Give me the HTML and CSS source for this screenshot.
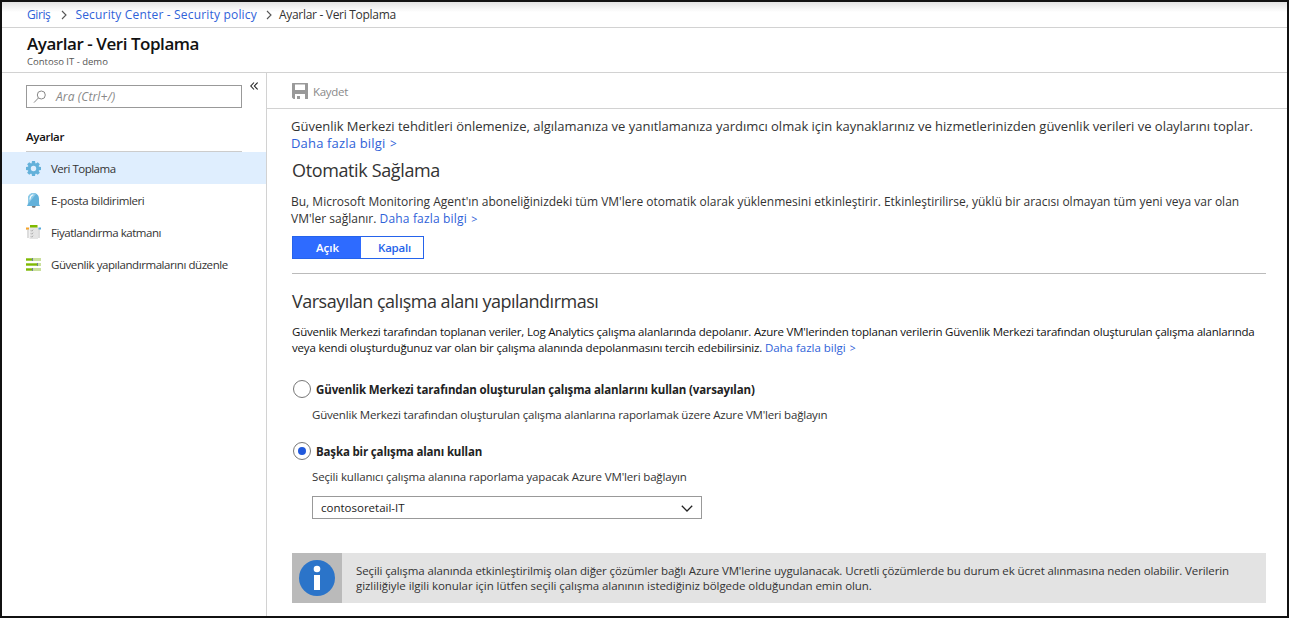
FILE: index.html
```html
<!DOCTYPE html>
<html lang="tr">
<head>
<meta charset="utf-8">
<title>Ayarlar - Veri Toplama</title>
<link rel="stylesheet" href="styles.css">
</head>
<body>
<div class="portal">
  <nav class="breadcrumb">
    <a class="crumb-home">Giriş</a>
    <svg class="sep" width="6" height="10" viewBox="0 0 6 10"><path d="M1 1l4 4-4 4"/></svg>
    <a class="crumb-policy">Security Center - Security policy</a>
    <svg class="sep sep-last" width="6" height="10" viewBox="0 0 6 10"><path d="M1 1l4 4-4 4"/></svg>
    <span class="crumb-current">Ayarlar - Veri Toplama</span>
  </nav>
  <header class="heading">
    <h1><span class="title">Ayarlar - Veri Toplama</span></h1>
    <div><span class="subtitle">Contoso IT - demo</span></div>
  </header>
  <div class="body">
    <aside class="sidebar">
      <div class="search-row">
        <div class="search">
          <svg width="14" height="14" viewBox="0 0 14 14"><circle cx="8.3" cy="5" r="4"/><path d="M5.4 8L1 12.6"/></svg>
          <span>Ara (Ctrl+/)</span>
        </div>
        <svg class="collapse" width="8" height="8" viewBox="0 0 8 8"><path d="M4 .5L.8 4 4 7.500M7.600 .5L4.400 4l3.200 3.500"/></svg>
      </div>
      <h2><span class="group">Ayarlar</span></h2>
      <ul class="menu">
        <li class="active">
          <svg width="16" height="16" viewBox="0 0 16 16"><g fill="#63b1da"><circle cx="7.500" cy="8.500" r="5.600"/><path id="t" d="M6 1h3l.5 3h-4zM6 16h3l.5-3h-4z"/><use href="#t" transform="rotate(45 7.500 8.500)"/><use href="#t" transform="rotate(90 7.500 8.500)"/><use href="#t" transform="rotate(135 7.500 8.500)"/></g><circle cx="7.500" cy="8.500" r="2.700" fill="#dfeefe"/></svg>
          <span class="m1">Veri Toplama</span>
        </li>
        <li>
          <svg width="16" height="16" viewBox="0 0 16 16"><path d="M5.500 13.500h4.500l-1 2.300H6.500z" fill="#777"/><path d="M.8 14c1-1 1.200-2 1.200-4V7C2 3.500 4.200 1 7.500 1S13 3.500 13 7v3c0 2 .2 3 1.200 4z" fill="#63b1da"/><path d="M2 12V7C2 3.500 4.200 1 7.500 1c1.200 0 2 .2 2.800.7z" fill="#8ecbe8"/><path d="M4 7.500c0-3 1.200-4.200 3.300-4.800" fill="none" stroke="#fff" stroke-width="1.100"/></svg>
          <span class="m2">E-posta bildirimleri</span>
        </li>
        <li>
          <svg width="16" height="16" viewBox="0 0 16 16"><path d="M0 4h3v10H1V6H0zM12 4h2v10h-2z" fill="#ddd"/><path d="M0 3.500h3v2H0z" fill="#f7a52b"/><path d="M12.500 3.500H15v2h-2.500z" fill="#55aadd"/><path d="M3.500 3h8.500v12H3.500z" fill="#e4e4e4"/><path d="M4 1h7.500v2.500H4z" fill="#7fba00"/><path d="M5 6.500l.7 .7 1.300-1.500M5 9.500l.7 .7 1.300-1.500M5 12.500l.7 .7 1.300-1.500" fill="none" stroke="#8a8a8a" stroke-width=".7"/></svg>
          <span class="m3">Fiyatlandırma katmanı</span>
        </li>
        <li>
          <svg width="16" height="16" viewBox="0 0 16 16"><path d="M0 2h15v3H0zM0 7h15v3H0zM0 12h15v3H0z" fill="#c9e09c"/><path d="M0 2.500h6v2H0zM0 7.500h11v2H0zM0 12.500h6v2H0z" fill="#7fba00"/><path d="M6 2h1v3H6zM11 7h1v3h-1zM6 12h1v3H6z" fill="#718096"/></svg>
          <span class="m4">Güvenlik yapılandırmalarını düzenle</span>
        </li>
      </ul>
    </aside>
    <main>
      <div class="toolbar">
        <svg width="16" height="16" viewBox="0 0 16 16"><path fill-rule="evenodd" d="M0 .5Q0 0 .5 0h15q.5 0 .5.5V16h-3v-5H3v5H1.500L0 14.500zM3 1.500v5.500h10V1.500z" fill="#999"/><path d="M5 13h3v3H5z" fill="#999"/></svg>
        <span class="save">Kaydet</span>
      </div>
      <div class="content">
        <p class="intro"><span class="i1">Güvenlik Merkezi tehditleri önlemenize, algılamanıza ve yanıtlamanıza yardımcı olmak için kaynaklarınız ve hizmetlerinizden güvenlik verileri ve olaylarını toplar.</span><br><a class="i2">Daha fazla bilgi <span class="gt">&gt;</span></a></p>
        <h3><span class="h-auto">Otomatik Sağlama</span></h3>
        <p class="agent"><span class="a1">Bu, Microsoft Monitoring Agent'ın aboneliğinizdeki tüm VM'lere otomatik olarak yüklenmesini etkinleştirir. Etkinleştirilirse, yüklü bir aracısı olmayan tüm yeni veya var olan</span><br><span class="a2">VM'ler sağlanır. <a>Daha fazla bilgi <span class="gt">&gt;</span></a></span></p>
        <div class="toggle"><span class="on">Açık</span><span class="off">Kapalı</span></div>
        <hr>
        <h3 class="workspace"><span class="h-work">Varsayılan çalışma alanı yapılandırması</span></h3>
        <p class="storage"><span class="s1">Güvenlik Merkezi tarafından toplanan veriler, Log Analytics çalışma alanlarında depolanır. Azure VM'lerinden toplanan verilerin Güvenlik Merkezi tarafından oluşturulan çalışma alanlarında</span><br><span class="s2">veya kendi oluşturduğunuz var olan bir çalışma alanında depolanmasını tercih edebilirsiniz. <a>Daha fazla bilgi <span class="gt">&gt;</span></a></span></p>
        <div class="option">
          <div class="choice"><i class="radio"></i><b class="r1">Güvenlik Merkezi tarafından oluşturulan çalışma alanlarını kullan (varsayılan)</b></div>
          <div class="desc"><span class="d1">Güvenlik Merkezi tarafından oluşturulan çalışma alanlarına raporlamak üzere Azure VM'leri bağlayın</span></div>
        </div>
        <div class="option">
          <div class="choice"><i class="radio checked"></i><b class="r2">Başka bir çalışma alanı kullan</b></div>
          <div class="desc"><span class="d2">Seçili kullanıcı çalışma alanına raporlama yapacak Azure VM'leri bağlayın</span></div>
        </div>
        <div class="select"><span>contosoretail-IT</span><svg width="12" height="7" viewBox="0 0 12 7"><path d="M.8 .8L6 6l5.200-5.200"/></svg></div>
        <div class="notice">
          <div class="notice-icon"><svg width="36" height="36" viewBox="0 0 36 36"><circle cx="18" cy="18" r="18" fill="#2b74c9"/><circle cx="18" cy="9" r="3.300" fill="#fff"/><path d="M15 15h6v15h-6z" fill="#fff"/></svg></div>
          <p><span class="n1">Seçili çalışma alanında etkinleştirilmiş olan diğer çözümler bağlı Azure VM'lerine uygulanacak. Ucretli çözümlerde bu durum ek ücret alınmasına neden olabilir. Verilerin</span><br><span class="n2">gizliliğiyle ilgili konular için lütfen seçili çalışma alanının istediğiniz bölgede olduğundan emin olun.</span></p>
        </div>
      </div>
    </main>
  </div>
</div>
</body>
</html>
```
FILE: styles.css
```css
* { box-sizing: border-box; }
body { margin: 0; font-family: "Open Sans", "Noto Sans", sans-serif; font-size: 11.5px; color: #333; background: #fff; }
h1, h2, h3, p, ul { margin: 0; padding: 0; font-weight: 400; }
span, b, a { white-space: nowrap; }
a { color: #2f62d8; }
.gt { font-size: .9em; margin-left: 1px; }
svg { display: block; flex: none; }
.portal { width: 1289px; height: 618px; border: 2px solid #111; display: flex; flex-direction: column; overflow: hidden; }
.breadcrumb { height: 26px; flex: none; display: flex; align-items: center; padding-left: 25px; border-bottom: 1px solid #d2d2d2; background: linear-gradient(#e2e2e2, #fff 10px); font-size: 12px; }
.crumb-home { letter-spacing: -.4px; }
.crumb-policy { letter-spacing: .18px; }
.crumb-current { letter-spacing: -.3px; }
.sep { margin: 0 8px 0 11px; }
.sep-last { margin: 0 7px 0 9px; }
.sep path { fill: none; stroke: #555; stroke-width: 1.1; }
.heading { height: 45px; flex: none; padding: 5px 0 0 25px; border-bottom: 1px solid #d2d2d2; }
.heading h1 { font-size: 17px; line-height: 22px; font-weight: 600; color: #111; letter-spacing: -.45px; }
.heading div { font-size: 9.500px; line-height: 13px; color: #555; }
.body { flex: 1; display: flex; min-height: 0; }
.sidebar { width: 265px; flex: none; border-right: 1px solid #d2d2d2; }
.search-row { display: flex; padding: 12px 0 0 24px; gap: 8px; }
.search { width: 216px; height: 23px; border: 1px solid #999; display: flex; align-items: center; gap: 9px; padding-left: 6px; font-size: 12px; font-style: italic; color: #888; letter-spacing: .1px; }
.search svg { fill: none; stroke: #888; stroke-width: 1; }
.collapse { margin-top: -3px; fill: none; stroke: #222; stroke-width: 1.100; }
h2 { margin: 17px 0 0 24px; width: 216px; height: 27px; line-height: 24px; font-size: 11.500px; font-weight: 600; color: #111; border-bottom: 1px solid #ccc; letter-spacing: -.3px; }
.menu { list-style: none; }
.menu li { height: 32px; display: flex; align-items: center; gap: 9px; padding-left: 24px; letter-spacing: -.43px; }
.menu .m1 { letter-spacing: -.5px; }
.menu .m2 { letter-spacing: -.38px; }
.menu .m3 { letter-spacing: -.46px; }
.menu .active { background: #dfeefe; }
main { flex: 1; min-width: 0; }
.toolbar { height: 36px; border-bottom: 1px solid #d2d2d2; display: flex; align-items: center; gap: 5px; padding-left: 25px; color: #8a8a8a; }
.save { letter-spacing: -.3px; padding-top: 1px; }
.content { padding: 9px 21px 0 25px; }
.intro { font-size: 13px; line-height: 17px; margin-left: -1px; }
.i1 { letter-spacing: -.01px; }
.i2 { letter-spacing: .17px; }
h3 { font-size: 18px; line-height: 24px; margin-top: 6px; }
.h-auto { letter-spacing: -.37px; }
.h-work { letter-spacing: -.5px; }
.agent { font-size: 12px; line-height: 17px; margin: 11px 0 0 -1px; }
.agent a { letter-spacing: .17px; }
.toggle { width: 132px; height: 23px; margin-top: 9px; border: 1px solid #2563eb; display: flex; font-weight: 600; line-height: 21px; }
.on { width: 68px; background: #2e6bff; color: #fff; padding-left: 23px; }
.off { padding-left: 17px; color: #2563eb; letter-spacing: -.2px; }
hr { border: 0; height: 1px; background: #bbb; margin: 14px 0 0; }
.workspace { margin-top: 15px; }
.storage { margin-top: 11px; line-height: 16px; color: #111; }
.s1 { letter-spacing: -.205px; }
.s2 { letter-spacing: -.185px; }
.s2 a { letter-spacing: -.02px; }
.option { height: 62px; }
.storage + .option { margin-top: 24px; }
.choice { height: 18px; display: flex; align-items: center; gap: 5px; padding-left: 1px; }
.choice b { font-size: 11.500px; font-weight: 700; color: #222; }
.choice .r1 { letter-spacing: -.13px; }
.choice .r2 { letter-spacing: -.16px; }
.radio { width: 18px; height: 18px; border: 1px solid #777; border-radius: 50%; display: grid; place-items: center; }
.checked::after { content: ""; width: 8px; height: 8px; border-radius: 50%; background: #2159dc; }
.desc { margin: 9px 0 0 20px; line-height: 16px; }
.d1 { letter-spacing: -.19px; }
.d2 { letter-spacing: -.15px; }
.select { margin: -8px 0 0 20px; width: 390px; height: 23px; border: 1px solid #999; padding: 0 8px; display: flex; align-items: center; justify-content: space-between; color: #222; }
.select svg { margin-top: 1px; }
.select path { fill: none; stroke: #222; stroke-width: 1.300; }
.notice { display: flex; height: 50px; margin-top: 34px; background: #e3e3e3; }
.notice-icon { width: 50px; background: #bababa; display: grid; place-items: center; }
.notice p { padding: 10px 0 0 14px; line-height: 15px; }
.n1 { letter-spacing: -.12px; }
.n2 { letter-spacing: -.06px; }
```
